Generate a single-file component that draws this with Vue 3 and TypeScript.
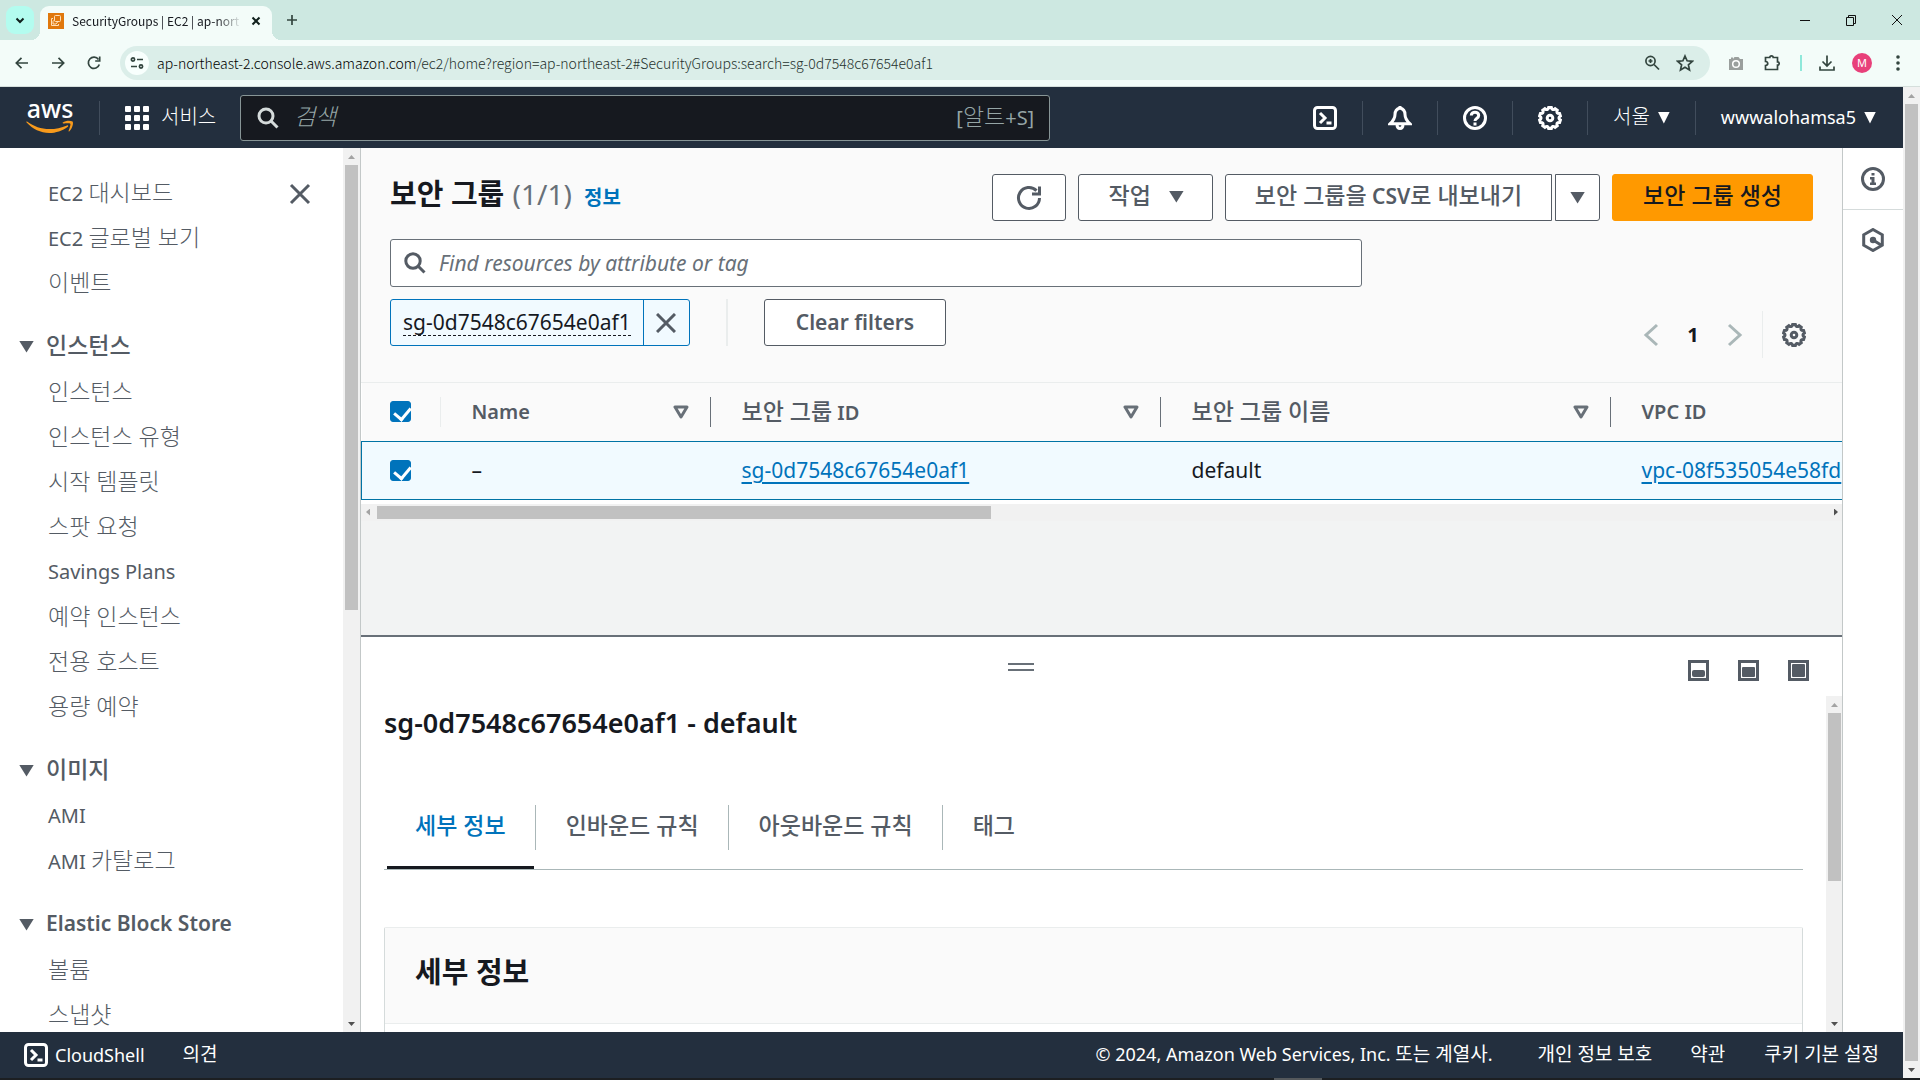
<script setup lang="ts">
import { h, ref } from 'vue'

interface NavItem { label: string }
interface NavGroup { title: string; items: NavItem[] }

// Hangul runs are set a little larger than the Latin text beside them.
const HANGUL = /([\uac00-\ud7a3]+(?:\s+[\uac00-\ud7a3]+)*)/
const Txt = (props: { t: string }) =>
  h('span', { class: 'txt' }, props.t.split(HANGUL).filter(Boolean).map((s) =>
    HANGUL.test(s) ? h('span', { class: 'ko' }, s) : s))
Txt.props = ['t']

const toItems = (labels: string[]): NavItem[] => labels.map((label) => ({ label }))

const topLinks = toItems(['EC2 대시보드', 'EC2 글로벌 보기', '이벤트'])
const groups: NavGroup[] = [
  { title: '인스턴스', items: toItems(['인스턴스', '인스턴스 유형', '시작 템플릿', '스팟 요청', 'Savings Plans', '예약 인스턴스', '전용 호스트', '용량 예약']) },
  { title: '이미지', items: toItems(['AMI', 'AMI 카탈로그']) },
  { title: 'Elastic Block Store', items: toItems(['볼륨', '스냅샷']) },
]
const tabs = ['세부 정보', '인바운드 규칙', '아웃바운드 규칙', '태그']
const activeTab = ref(0)
const allChecked = ref(true)
const rowChecked = ref(true)

// Outline of a gear with ten rounded teeth, in a 24 unit box.
const gearPath = (() => {
  const teeth = 10
  const at = (r: number, k: number) => {
    const a = (k / teeth) * 2 * Math.PI - Math.PI / 2
    return `${(12 + r * Math.cos(a)).toFixed(2)} ${(12 + r * Math.sin(a)).toFixed(2)}`
  }
  let d = ''
  for (let i = 0; i < teeth; i++) {
    d += `${i ? 'L' : 'M'}${at(10.6, i - 0.2)} L${at(10.6, i + 0.2)} Q${at(7.4, i + 0.5)} ${at(10.6, i + 0.8)} `
  }
  return d + 'Z'
})()
</script>

<template>
  <div class="window">
    <div class="tabstrip">
      <button class="tab-search" aria-label="탭 검색"><svg width="12" height="12" viewBox="0 0 12 12"><path d="M2.500 4.500L6 8l3.500-3.500" class="ln2 bold" /></svg></button>
      <div class="browser-tab">
        <svg width="16" height="16" viewBox="0 0 16 16"><rect width="16" height="16" fill="#e0780c" /><g fill="none" stroke="#ffe0b8" stroke-width="1"><rect x="6.500" y="2.500" width="6" height="6" rx="1" /><path d="M5 5.500H3.500v7h7V11" /><path d="M6.500 7L5 8.500v2.500h3l2-2.500" /></g></svg>
        <span class="tab-title">SecurityGroups | EC2 | ap-nort</span>
        <button class="tab-close" aria-label="탭 닫기"><svg width="12" height="12" viewBox="0 0 12 12"><path d="M2.500 2.500l7 7M9.500 2.500l-7 7" class="ln2 bold" /></svg></button>
      </div>
      <button class="new-tab" aria-label="새 탭"><svg width="14" height="14" viewBox="0 0 14 14"><path d="M7 2v10M2 7h10" class="ln2" /></svg></button>
      <div class="win-buttons">
        <button aria-label="최소화"><svg width="12" height="12" viewBox="0 0 12 12"><path d="M1 6.500h10" class="ln1" /></svg></button>
        <button aria-label="이전 크기로"><svg width="12" height="12" viewBox="0 0 12 12"><path d="M1.500 3.500h7v8h-7zM3.500 3.500v-2h7v8h-2" class="ln1" /></svg></button>
        <button aria-label="닫기"><svg width="12" height="12" viewBox="0 0 12 12"><path d="M1 1l10 10M11 1L1 11" class="ln1" /></svg></button>
      </div>
    </div>

    <div class="toolbar">
      <button aria-label="뒤로"><svg width="16" height="16" viewBox="0 0 16 16"><path d="M14 8H2.500M7.500 2.800L2.300 8l5.200 5.200" class="ln2" /></svg></button>
      <button aria-label="앞으로"><svg width="16" height="16" viewBox="0 0 16 16"><path d="M2 8h11.500M8.500 2.800L13.700 8l-5.200 5.200" class="ln2" /></svg></button>
      <button aria-label="새로고침"><svg width="16" height="16" viewBox="0 0 16 16"><path d="M13.300 9.500A5.600 5.600 0 1 1 12.500 4.500" class="ln2" /><path d="M13.700 1.500v4.500H9.200" class="ln2" /></svg></button>
      <div class="omnibox">
        <span class="site-info"><svg width="16" height="16" viewBox="0 0 16 16"><g class="ln2"><circle cx="4" cy="4.500" r="1.600" /><path d="M8 4.500h6M2 11.500h6" /><circle cx="12" cy="11.500" r="1.600" /></g></svg></span>
        <span class="url"><b>ap-northeast-2.console.aws.amazon.com</b>/ec2/home?region=ap-northeast-2#SecurityGroups:search=sg-0d7548c67654e0af1</span>
        <svg width="16" height="16" viewBox="0 0 16 16"><g class="ln2"><circle cx="6.500" cy="6" r="4.600" /><path d="M10 9.500l5 5" /></g><path d="M6.500 4v4M4.500 6h4" class="ln2" /></svg>
        <svg width="18" height="18" viewBox="0 0 18 18"><path d="M9 2l2.100 4.800 5.200.5-3.900 3.500 1.100 5.100L9 13.200l-4.500 2.700 1.100-5.100L1.700 7.300l5.200-.5z" class="ln2" /></svg>
      </div>
      <div class="ext">
        <svg class="spaced" width="16" height="16" viewBox="0 0 16 16"><path fill="#9a9f9d" d="M1 4h2V2.500h2V4l1.500-2h4L12 4h3v11H1z" /><circle cx="8" cy="9" r="3.300" fill="none" stroke="#fff" stroke-width="1.500" /></svg>
        <svg class="spaced" width="18" height="18" viewBox="0 0 18 18"><path d="M2.500 3.500h4.300a1.700 1.700 0 0 1 3.400 0h4.300v4.300a1.700 1.700 0 0 1 0 3.400v4.300h-12v-4c3-.2 3-3.700 0-4z" class="ln2" /></svg>
        <i class="ext-sep"></i>
        <svg width="18" height="18" viewBox="0 0 18 18"><path d="M9 1.500v10M4.500 7.500L9 12l4.500-4.500M2 12.500v3.500h14v-3.500" class="ln2" /></svg>
        <span class="avatar">M</span>
        <svg width="4" height="16" viewBox="0 0 4 16" fill="#33453f"><circle cx="2" cy="2" r="1.800" /><circle cx="2" cy="8" r="1.800" /><circle cx="2" cy="14" r="1.800" /></svg>
      </div>
    </div>

    <div class="viewport">
      <div class="page">
        <header class="topnav">
          <a href="#" class="logo"><span>aws</span><svg width="48" height="14" viewBox="0 0 48 14"><path fill="#f79a1c" d="M1 1.500c7 5 14 7.600 22.500 7.600 6 0 12-1.300 17.500-3.700 1-.4 1.800.6.8 1.300C36.500 10.700 29.800 13 23.200 13 14.500 13 6.800 9.200.6 2.600-.1 1.900.300 1.100 1 1.500z" /><path fill="#f79a1c" d="M36.800 2.600c2.600-1.900 7-2.300 9.800-1.100 1.100 1.200-.1 7-3.200 9.700-.6.500-1.100.1-.8-.5.800-1.900 2.300-6.200 1.700-7-.6-.9-4.900-.5-6.800-.3-.8.100-1.200-.400-.7-.8z" /></svg></a>
          <i class="vsep"></i>
          <button class="services">
            <svg width="24" height="24" viewBox="0 0 24 24" fill="#fff"><template v-for="r in 3" :key="r"><rect v-for="c in 3" :key="c" :x="(c - 1) * 9" :y="(r - 1) * 9" width="6" height="6" rx="1" /></template></svg>
            <Txt t="서비스" />
          </button>
          <label class="search">
            <svg width="22" height="22" viewBox="0 0 22 22"><g fill="none" stroke="#d5dbdb" stroke-width="3"><circle cx="9" cy="9" r="7" /><path d="M14 14l6.500 6.500" /></g></svg>
            <input type="search" placeholder="검색" aria-label="검색" />
            <Txt t="[알트+S]" />
          </label>
          <div class="nav-right">
            <button aria-label="CloudShell"><svg width="24" height="24" viewBox="0 0 24 24" class="w3"><rect x="1.500" y="1.500" width="21" height="21" rx="3" /><path d="M7 7l5 5-5 5M13.500 17h5" /></svg></button>
            <i class="vsep"></i>
            <button aria-label="알림"><svg width="24" height="24" viewBox="0 0 24 24" class="w3"><path d="M12 2c-3.200.8-5 3.200-5 6.500 0 4-1.500 6-4.800 9.200h19.600C18.500 14.500 17 12.500 17 8.500 17 5.200 15.200 2.800 12 2zM12 0v3M9 18.500c0 5.300 6 5.300 6 0" /></svg></button>
            <i class="vsep"></i>
            <button aria-label="지원"><svg width="24" height="24" viewBox="0 0 24 24" class="w3"><circle cx="12" cy="12" r="10.500" /><path d="M8.300 9.500c0-4.500 7.400-4.500 7.400 0 0 2.700-3.700 2.700-3.700 5.500M12 16.500v3" /></svg></button>
            <i class="vsep"></i>
            <button aria-label="설정"><svg width="24" height="24" viewBox="0 0 24 24" class="w3"><path :d="gearPath" /><circle cx="12" cy="12" r="2.800" /></svg></button>
            <i class="vsep"></i>
            <button class="region"><Txt t="서울" /><i class="tri"></i></button>
            <i class="vsep"></i>
            <button class="account"><Txt t="wwwalohamsa5" /><i class="tri"></i></button>
          </div>
        </header>

        <div class="body">
          <nav class="sidebar">
            <div class="side-list">
              <ul class="first">
                <li v-for="l in topLinks" :key="l.label"><a href="#"><Txt :t="l.label" /></a></li>
              </ul>
              <button class="side-close" aria-label="탐색 닫기"><svg width="22" height="22" viewBox="0 0 22 22"><path d="M2 2l18 18M20 2L2 20" class="g3" /></svg></button>
              <section v-for="g in groups" :key="g.title">
                <h3><i class="tri"></i><Txt :t="g.title" /></h3>
                <ul><li v-for="l in g.items" :key="l.label"><a href="#"><Txt :t="l.label" /></a></li></ul>
              </section>
            </div>
            <div class="vbar side-bar" aria-hidden="true"><i class="up"></i><i class="thumb"></i><i class="grow"></i><i class="down"></i></div>
          </nav>

          <main class="content">
            <div class="list-pane">
              <div class="list-head">
                <div class="title-row">
                  <h1><Txt t="보안 그룹" /> <span class="count">(1/1)</span> <a href="#" class="info"><Txt t="정보" /></a></h1>
                  <div class="actions">
                    <button class="btn refresh" aria-label="새로 고침"><svg width="26" height="26" viewBox="0 0 26 26"><path d="M23.500 13a10.500 10.500 0 1 1-3-7.400" class="g3" /><path d="M23.500 1.500v7.500H16" class="g3" /></svg></button>
                    <button class="btn act"><Txt t="작업" /><i class="tri"></i></button>
                    <span class="split"><button class="btn csv"><Txt t="보안 그룹을 CSV로 내보내기" /></button><button class="btn more" aria-label="더 보기"><i class="tri"></i></button></span>
                    <button class="btn primary"><Txt t="보안 그룹 생성" /></button>
                  </div>
                </div>
                <div class="filter-row">
                  <div class="filters">
                    <label class="find"><svg width="22" height="22" viewBox="0 0 22 22"><g class="g3"><circle cx="9" cy="9" r="7.200" /><path d="M14 14l6.500 6.500" /></g></svg><input type="text" placeholder="Find resources by attribute or tag" aria-label="Find resources" /></label>
                    <div class="tokens">
                      <span class="token"><span class="token-text"><button>sg-0d7548c67654e0af1</button></span><button class="token-x" aria-label="필터 제거"><svg width="20" height="20" viewBox="0 0 20 20"><path d="M1 1l18 18M19 1L1 19" class="g3" /></svg></button></span>
                      <i class="token-sep"></i>
                      <button class="btn clear">Clear filters</button>
                    </div>
                  </div>
                  <div class="pager">
                    <button aria-label="이전 페이지"><svg width="16" height="24" viewBox="0 0 16 24"><path d="M14 2L3 12l11 10" class="pg" /></svg></button>
                    <button class="page-no">1</button>
                    <button aria-label="다음 페이지"><svg width="16" height="24" viewBox="0 0 16 24"><path d="M2 2l11 10L2 22" class="pg" /></svg></button>
                    <i class="pager-sep"></i>
                    <button aria-label="기본 설정"><svg width="24" height="24" viewBox="0 0 24 24"><g class="g3"><path :d="gearPath" /><circle cx="12" cy="12" r="2.800" /></g></svg></button>
                  </div>
                </div>
              </div>
              <div class="table-wrap">
                <table>
                  <colgroup><col class="c0" /><col class="c1" /><col class="c2" /><col class="c2" /><col class="c2" /></colgroup>
                  <thead><tr>
                    <th><div class="cell thin"><input v-model="allChecked" type="checkbox" aria-label="모두 선택" /></div></th>
                    <th v-for="name in ['Name', '보안 그룹 ID', '보안 그룹 이름', 'VPC ID']" :key="name"><div class="cell"><Txt :t="name" /><svg width="16" height="16" viewBox="0 0 16 16"><path d="M2 3h12L8 13z" class="sort" /></svg></div></th>
                  </tr></thead>
                  <tbody><tr>
                    <td><div class="cell"><input v-model="rowChecked" type="checkbox" aria-label="sg-0d7548c67654e0af1 선택" /></div></td>
                    <td>–</td>
                    <td><a href="#">sg-0d7548c67654e0af1</a></td>
                    <td>default</td>
                    <td><a href="#">vpc-08f535054e58fd</a></td>
                  </tr></tbody>
                </table>
              </div>
              <div class="hbar" aria-hidden="true"><i class="left"></i><i class="thumb"></i><i class="grow"></i><i class="right"></i></div>
            </div>

            <section class="panel">
              <div class="panel-top">
                <i class="handle"></i>
                <div class="sizes">
                  <button aria-label="작게"><svg width="21" height="21" viewBox="0 0 21 21"><rect x="1.500" y="1.500" width="18" height="18" class="g3" /><rect x="4" y="10" width="13" height="7" rx="2" fill="#545b64" /></svg></button>
                  <button aria-label="중간"><svg width="21" height="21" viewBox="0 0 21 21"><rect x="1.500" y="1.500" width="18" height="18" class="g3" /><rect x="4" y="7" width="13" height="10" rx="1" fill="#545b64" /></svg></button>
                  <button aria-label="크게"><svg width="21" height="21" viewBox="0 0 21 21"><rect x="1.500" y="1.500" width="18" height="18" class="g3" /><rect x="4" y="4" width="13" height="13" rx="1" fill="#545b64" /></svg></button>
                </div>
              </div>
              <div class="panel-scroll">
                <div class="panel-body">
                  <h2 class="panel-title">sg-0d7548c67654e0af1 - default</h2>
                  <div class="tabs" role="tablist">
                    <button v-for="(t, i) in tabs" :key="t" role="tab" :aria-selected="i === activeTab" :class="{ active: i === activeTab }" @click="activeTab = i"><Txt :t="t" /></button>
                  </div>
                  <div class="card"><h2><Txt t="세부 정보" /></h2></div>
                </div>
                <div class="vbar panel-bar" aria-hidden="true"><i class="up"></i><i class="thumb"></i><i class="grow"></i><i class="down"></i></div>
              </div>
            </section>
          </main>

          <aside class="rail">
            <button aria-label="정보"><svg width="24" height="24" viewBox="0 0 24 24"><circle cx="12" cy="12" r="10.500" class="g3" /><path fill="#545b64" d="M10.500 6h3v2.500h-3zM9 10h4.500v5.500H15V18H9v-2.500h1.500v-3H9z" /></svg></button>
            <button aria-label="진단"><svg width="24" height="24" viewBox="0 0 24 24"><path d="M12 1.500l9.300 5.300v10.400L12 22.500l-9.300-5.300V6.800z" class="g3" /><path d="M12 12l8 5" class="g3" /><circle cx="12" cy="12" r="3.200" fill="#545b64" /></svg></button>
          </aside>
        </div>

        <footer class="footer">
          <button class="shell"><svg width="24" height="24" viewBox="0 0 24 24" class="w3"><rect x="1.500" y="1.500" width="21" height="21" rx="3" /><path d="M7 7l5 5-5 5M13.500 17h5" /></svg><span>CloudShell</span></button>
          <a href="#"><Txt t="의견" /></a>
          <span class="copy"><Txt t="© 2024, Amazon Web Services, Inc. 또는 계열사." /></span>
          <a href="#"><Txt t="개인 정보 보호" /></a>
          <a href="#"><Txt t="약관" /></a>
          <a href="#"><Txt t="쿠키 기본 설정" /></a>
        </footer>
      </div>
      <div class="vbar page-bar" aria-hidden="true"><i class="up"></i><i class="thumb"></i><i class="down"></i></div>
    </div>
    <div class="taskbar"><i></i></div>
  </div>
</template>

<style>
body { margin: 0; overflow: hidden; }
.txt { white-space: pre; }
.ko { font-size: var(--ko); font-weight: var(--kw); }
</style>

<style scoped>
* { box-sizing: border-box; }
.window { --ko: 23px; --kw: 300; height: 100vh; display: flex; flex-direction: column; overflow: hidden; background: #fff; color: #16191f; font: 20px/30px "Noto Sans", "Noto Sans CJK KR", sans-serif; }
button { font: inherit; color: inherit; background: none; border: 0; padding: 0; margin: 0; display: flex; align-items: center; justify-content: center; flex: none; }
input { font: inherit; color: inherit; margin: 0; border: 0; padding: 0; background: none; outline: none; min-width: 0; }
svg { flex: none; display: block; }
a { color: inherit; text-decoration: none; }
h1, h2, h3, ul { margin: 0; padding: 0; }
ul { list-style: none; }
.ln2 { fill: none; stroke: #33453f; stroke-width: 1.7; }
.ln2.bold { stroke: #10201c; stroke-width: 2; }
.ln1 { fill: none; stroke: #111; stroke-width: 1; }
.g3 { fill: none; stroke: #545b64; stroke-width: 3; }
.w3 { fill: none; stroke: #fff; stroke-width: 3; }
.pg { fill: none; stroke: #aab7b8; stroke-width: 3; }
.sort { fill: none; stroke: #687078; stroke-width: 3; stroke-linejoin: round; }
.tri { width: 15px; height: 12px; background: currentColor; clip-path: polygon(0 0, 100% 0, 50% 100%); flex: none; }
.grow { flex: 1; }

.tabstrip { height: 40px; flex: none; display: flex; align-items: flex-end; background: #cde8e1; padding-left: 6px; }
.tab-search { width: 28px; height: 28px; margin: 0 6px 6px 0; border-radius: 9px; background: #b3fcef; }
.browser-tab { position: relative; width: 232px; height: 34px; border-radius: 9px 9px 0 0; background: #f3fcf9; display: flex; align-items: center; padding: 0 10px 4px 8px; gap: 8px; }
.browser-tab::before, .browser-tab::after { content: ""; position: absolute; bottom: 0; width: 9px; height: 9px; }
.browser-tab::before { right: 100%; background: radial-gradient(circle at 0 0, transparent 9px, #f3fcf9 9px); }
.browser-tab::after { left: 100%; background: radial-gradient(circle at 100% 0, transparent 9px, #f3fcf9 9px); }
.tab-title { flex: 1; white-space: nowrap; font: 12px/20px "Noto Sans CJK KR", sans-serif; mask-image: linear-gradient(90deg, #000 85%, transparent); }
.new-tab { width: 40px; height: 40px; }
.win-buttons { margin-left: auto; display: flex; height: 40px; }
.win-buttons button { width: 46px; }

.toolbar { height: 47px; flex: none; display: flex; align-items: center; background: #f3fcf9; border-bottom: 1px solid #d5dfdc; padding: 0 20px 0 14px; }
.toolbar > button { width: 16px; margin-right: 20px; }
.omnibox { flex: 1; height: 34px; margin-left: -2px; border-radius: 17px; background: #dbeee9; display: flex; align-items: center; padding: 0 16px 0 5px; gap: 16px; }
.site-info { width: 24px; height: 24px; border-radius: 12px; background: #f8fffd; display: flex; align-items: center; justify-content: center; margin-right: -8px; }
.url { flex: 1; font: 300 14px/20px "Noto Sans CJK KR", sans-serif; color: #26322e; }
.url b { font-weight: 300; color: #000; }
.ext { display: flex; align-items: center; gap: 16px; margin-left: 18px; }
.ext-sep { width: 2px; height: 16px; background: #8fe8da; }
.spaced { margin-right: 3px; }
.avatar { width: 20px; height: 20px; border-radius: 10px; background: #e8407a; color: #fff; font-size: 11px; line-height: 20px; text-align: center; }
.ext .avatar { margin: 0 8px 0 0; }

.viewport { flex: 1; min-height: 0; display: flex; }
.page { flex: 1; min-width: 0; display: flex; flex-direction: column; }

.topnav { height: 61px; flex: none; display: flex; align-items: center; background: #232f3e; color: #fff; padding: 0 27px 0 26px; --ko: 20px; font-size: 18px; }
.topnav .txt { padding-bottom: 2px; }
.logo { width: 48px; display: flex; flex-direction: column; align-items: center; padding-bottom: 4px; }
.logo span { font: 500 25px/20px "Noto Sans", sans-serif; }
.logo svg { margin-top: 2px; }
.vsep { width: 1px; height: 34px; background: #414d5c; flex: none; }
.topnav > .vsep { margin: 0 25px; }
.services { gap: 12px; }
.search { flex: 0 1 810px; height: 46px; margin-left: 24px; border: 1px solid #879596; border-radius: 3px; background: #16191f; display: flex; align-items: center; padding: 0 15px 0 16px; color: #95a5a6; font-size: 20px; --ko: 23px; }
.search input { flex: 1; margin-left: 15px; padding-bottom: 4px; font-size: 23px; font-style: italic; font-weight: 300; height: 40px; }
.search input::placeholder, .find input::placeholder { color: inherit; opacity: 1; }
.nav-right { margin-left: auto; display: flex; align-items: center; gap: 25px; }
.nav-right .tri { width: 12px; }
.region, .account { gap: 8px; }

.body { flex: 1; min-height: 0; display: flex; }
.sidebar { width: 360px; flex: none; display: flex; color: #545b64; }
.side-list { flex: 1; position: relative; overflow: hidden; padding-top: 22px; }
.side-list li { height: 45px; padding-left: 48px; line-height: 45px; }
.side-list section { margin-top: 19px; }
.side-list h3 { height: 45px; line-height: 45px; font-size: 21px; font-weight: 600; --kw: 500; display: flex; align-items: center; padding-left: 19px; gap: 12px; }
.side-list h3 .txt { padding-bottom: 2px; }
.side-close { position: absolute; right: 32px; top: 35px; }

.vbar { width: 17px; flex: none; background: #f1f1f1; display: flex; flex-direction: column; align-items: center; }
.vbar .thumb { width: 13px; background: #c1c1c1; flex: none; }
.up, .down { width: 17px; height: 17px; flex: none; display: block; position: relative; }
.up::after, .down::after, .left::after, .right::after { content: ""; position: absolute; left: 5px; top: 7px; width: 7px; height: 4px; background: #a3a3a3; clip-path: polygon(50% 0, 100% 100%, 0 100%); }
.down::after { background: #505050; clip-path: polygon(0 0, 100% 0, 50% 100%); }
.side-bar .thumb { height: 445px; }
.panel-bar .thumb { height: 168px; }
.vbar.page-bar .thumb { flex: 1; }

.content { flex: 1; min-width: 0; display: flex; flex-direction: column; border-left: 1px solid #c3c8c8; }
.list-pane { height: 487px; flex: none; background: #f2f3f3; }
.list-head { background: #fafafa; border-bottom: 1px solid #eaeded; padding: 26px 30px 24px 29px; }
.title-row { display: flex; justify-content: space-between; height: 65px; align-items: flex-start; }
h1 { --ko: 29px; --kw: 700; font-size: 28px; line-height: 40px; font-weight: 700; white-space: nowrap; }
.count { font-weight: 400; color: #687078; margin-left: 1px; }
.info { --ko: 20px; --kw: 600; font-size: 20px; color: #0073bb; margin-left: 5px; }
.actions { display: flex; gap: 12px; }
.btn { height: 47px; border: 1px solid #545b64; border-radius: 3px; background: #fff; color: #545b64; font-size: 21px; font-weight: 600; --kw: 500; padding: 0 30px 2px; white-space: nowrap; }
.actions .txt { padding-bottom: 2px; }
.refresh { padding: 0 23px; }
.act { gap: 18px; padding-right: 28px; }
.split { display: flex; gap: 3px; }
.csv { border-radius: 3px 0 0 3px; padding: 0 29px 2px; }
.more { padding: 0 14px; border-radius: 0 3px 3px 0; }
.primary { background: #ff9900; border-color: #ff9900; color: #16191f; }
.filter-row { display: flex; justify-content: space-between; align-items: flex-end; }
.filters { width: 972px; padding-bottom: 12px; }
.find { height: 48px; border: 1px solid #687078; border-radius: 3px; background: #fff; display: flex; align-items: center; padding: 0 13px; gap: 13px; color: #687078; }
.find input { flex: 1; font-size: 21px; font-style: italic; height: 40px; }
.tokens { display: flex; margin-top: 12px; }
.token { display: flex; height: 47px; border: 1px solid #0073bb; border-radius: 3px; background: #f1faff; color: #16191f; font-size: 21px; }
.token-text { padding: 9px 12px 0; border-right: 1px solid #0073bb; }
.token-text button { height: 27px; line-height: 27px; border-bottom: 1px dashed #16191f; }
.token-x { width: 45px; }
.token-sep { width: 2px; background: #eaeded; margin: 0 36px; }
.clear { padding: 0 31px 2px; }
.pager { display: flex; align-items: center; height: 47px; padding-right: 7px; }
.page-no { width: 68px; font-weight: 700; }
.pager-sep { width: 1px; height: 47px; background: #eaeded; margin: 0 19px; }

.table-wrap { overflow: hidden; background: #fff; padding-bottom: 4px; }
table { border-collapse: collapse; table-layout: fixed; width: 1699px; }
.c0 { width: 79px; } .c1 { width: 270px; } .c2 { width: 450px; }
th { height: 58px; padding: 0; background: #fafafa; text-align: left; font-weight: 600; --kw: 500; color: #545b64; }
.cell { height: 30px; display: flex; align-items: center; justify-content: space-between; padding: 0 21px 0 31px; border-right: 1px solid #687078; }
.cell.thin { border-color: #eaeded; padding-left: 28px; }
td { height: 58px; padding: 0 0 0 31px; background: #f1faff; border: solid #0073a5; border-width: 1px 0; font-size: 21px; }
td .cell { border: 0; padding: 0; }
td:first-child { border-left-width: 1px; padding-left: 28px; }
td a { color: #0073bb; text-decoration: underline; text-decoration-thickness: 2px; text-underline-offset: 4px; }
input[type="checkbox"] { appearance: none; width: 21px; height: 21px; border: 1px solid #687078; border-radius: 3px; position: relative; background: #fff; }
input[type="checkbox"]:checked { background: #0073bb; border-color: #0073bb; }
input[type="checkbox"]:checked::after { content: ""; position: absolute; left: 6px; top: 2px; width: 8px; height: 13px; border: solid #fff; border-width: 0 3px 3px 0; transform: rotate(40deg); }
.hbar { height: 17px; background: #f1f1f1; display: flex; align-items: center; }
.hbar .thumb { width: 614px; height: 13px; background: #c1c1c1; }
.left, .right { width: 16px; height: 17px; position: relative; }
.left::after { left: 5px; top: 5px; width: 4px; height: 7px; clip-path: polygon(0 50%, 100% 0, 100% 100%); }
.right::after { left: 7px; top: 5px; width: 4px; height: 7px; background: #505050; clip-path: polygon(0 0, 100% 50%, 0 100%); }

.panel { flex: 1; min-height: 0; border-top: 2px solid #687078; display: flex; flex-direction: column; background: #fff; }
.panel-top { height: 59px; flex: none; position: relative; display: flex; justify-content: flex-end; padding: 23px 34px 0 0; }
.handle { position: absolute; left: 647px; top: 26px; width: 26px; height: 8px; border: solid #687078; border-width: 2px 0; }
.sizes { display: flex; gap: 29px; align-items: flex-start; }
.panel-scroll { flex: 1; min-height: 0; display: flex; overflow: hidden; }
.panel-body { flex: 1; min-width: 0; padding: 6px 23px 0; overflow: hidden; }
.panel-title { font-size: 27px; line-height: 42px; font-weight: 600; white-space: nowrap; }
.tabs { display: flex; margin-top: 50px; height: 76px; border-bottom: 1px solid #aab7b8; padding-left: 3px; color: #545b64; --kw: 500; }
.tabs button { position: relative; align-items: flex-start; padding: 16px 30px 0; height: 75px; line-height: 30px; }
.tabs button:first-child { padding-left: 28px; }
.tabs button:not(:last-child)::before { content: ""; position: absolute; right: 0; top: 11px; height: 45px; border-right: 1px solid #aab7b8; }
.tabs .active { color: #0073bb; }
.tabs .active::after { content: ""; position: absolute; left: 0; right: 2px; bottom: 0; height: 3px; background: #16191f; }
.card { margin-top: 57px; height: 140px; border: 1px solid #d5dbdb; border-top-color: #eaeded; border-radius: 2px; }
.card h2 { --ko: 29px; --kw: 700; height: 96px; line-height: 88px; background: #fafafa; border-bottom: 1px solid #eaeded; padding-left: 30px; }

.rail { position: relative; width: 60px; flex: none; background: #fff; display: flex; flex-direction: column; box-shadow: -1px 0 #c3c8c8; }
.rail button { height: 60px; }
.rail button:first-child { height: 62px; border-bottom: 1px solid #d5dbdb; }

.footer { height: 46px; flex: none; display: flex; align-items: center; background: #232f3e; color: #fff; padding: 0 24px; font-size: 18px; --ko: 19px; --kw: 400; gap: 38px; white-space: nowrap; }
.shell { gap: 7px; }
.footer > a, .copy { padding-bottom: 2px; }
.copy { margin-left: auto; margin-right: 7px; }
.footer > a:last-child { margin-left: 1px; }
.taskbar { height: 2px; flex: none; background: #1c1f22; padding-left: 1274px; }
.taskbar i { display: block; width: 48px; height: 2px; background: #55595c; }
</style>
